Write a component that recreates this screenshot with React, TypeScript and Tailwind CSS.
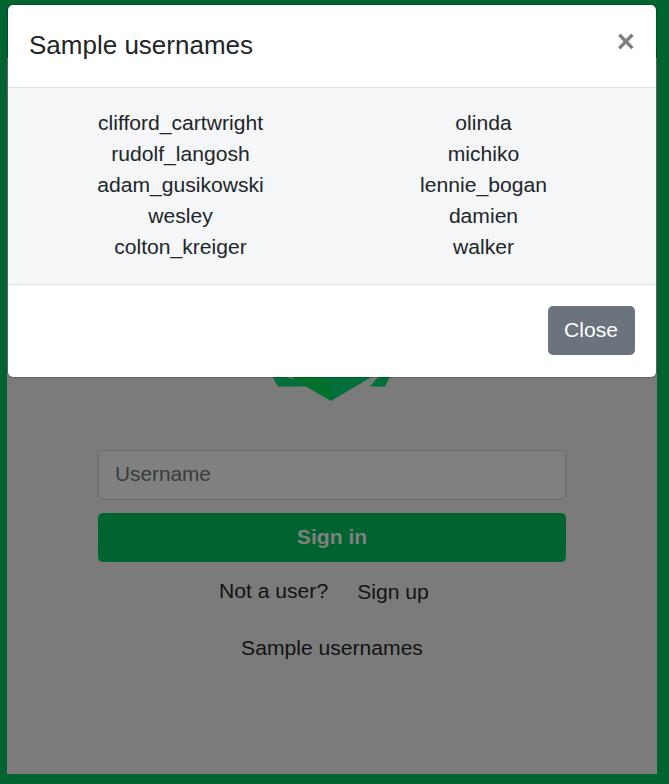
const columns = [
  ["clifford_cartwright", "rudolf_langosh", "adam_gusikowski", "wesley", "colton_kreiger"],
  ["olinda", "michiko", "lennie_bogan", "damien", "walker"],
];

function Logo() {
  return (
    <svg className="mr-[3px] block h-[116px] w-[120px]" viewBox="0 0 120 116">
      <path d="M1 90 L7 100.6 H50 L31 90 Z" fill="#006f3b" />
      <path d="M17 90 L60 115 V90 Z" fill="#00702b" />
      <path d="M11 90 L24 93.4 L19 90 Z" fill="#7c7c7c" />
      <path d="M60 90 V115 L102 90 Z" fill="#006f3b" />
      <path d="M108 90 H119.5 L114 100.6 H99 Z" fill="#006f3b" />
    </svg>
  );
}

function SignIn() {
  return (
    <main className="mx-auto mt-[58px] flex h-[716px] w-[650px] flex-col items-center bg-[#7b7b7b] pt-[228px] text-[#111315]">
      <Logo />
      <form className="mt-12 flex w-[468px] flex-col gap-[13px]" onSubmit={(e) => e.preventDefault()}>
        <input
          placeholder="Username"
          className="h-[50px] rounded-[5px] border border-[#676a6d] bg-[#808080] px-4 pb-[2px] text-[20.8px] outline-none placeholder:text-[#363b3f]"
        />
        <button className="h-[49px] rounded-[5px] bg-[#006430] pb-[2px] font-bold text-[#808080]">Sign in</button>
      </form>
      <div className="mt-[13px] flex w-[468px] pl-[121px]">
        <span>Not a user?</span>
        <a className="ml-[29px] mt-px">Sign up</a>
      </div>
      <a className="mt-[25px]">Sample usernames</a>
    </main>
  );
}

function UsernamesDialog() {
  return (
    <section
      role="dialog"
      className="absolute left-[7px] top-[4px] w-[650px] rounded-[6px] border border-black/20 bg-white bg-clip-padding text-[#212529]"
    >
      <header className="flex h-[83px] items-start justify-between border-b border-[#dee2e6] pl-[21px] pr-[21px] pt-[21px]">
        <h2 className="text-[26px] leading-[39px]">Sample usernames</h2>
        <button aria-label="Close dialog" className="text-[31.2px] font-bold leading-[31px] text-black opacity-50 will-change-[opacity]">×</button>
      </header>
      <div className="flex h-[197px] border-b border-[#dee2e6] bg-[#f4f6f8] px-[21px] pt-[19px]">
        {columns.map((names) => (
          <ul key={names[0]} className="flex-1 text-center">
            {names.map((name) => (
              <li key={name} className="leading-[31px]">{name}</li>
            ))}
          </ul>
        ))}
      </div>
      <footer className="flex h-[92px] items-start justify-end px-[21px] pt-[21px]">
        <button className="h-[49px] w-[87px] rounded-[5px] bg-[#6b737f] pb-[2px] pr-px text-white">Close</button>
      </footer>
    </section>
  );
}

export default function App() {
  return (
    <div className="relative flow-root h-[784px] w-[669px] overflow-hidden bg-[#006430] pr-[5px] font-['Liberation_Sans',Arial,sans-serif] text-[21.12px] leading-[31px]">
      <SignIn />
      <UsernamesDialog />
    </div>
  );
}
